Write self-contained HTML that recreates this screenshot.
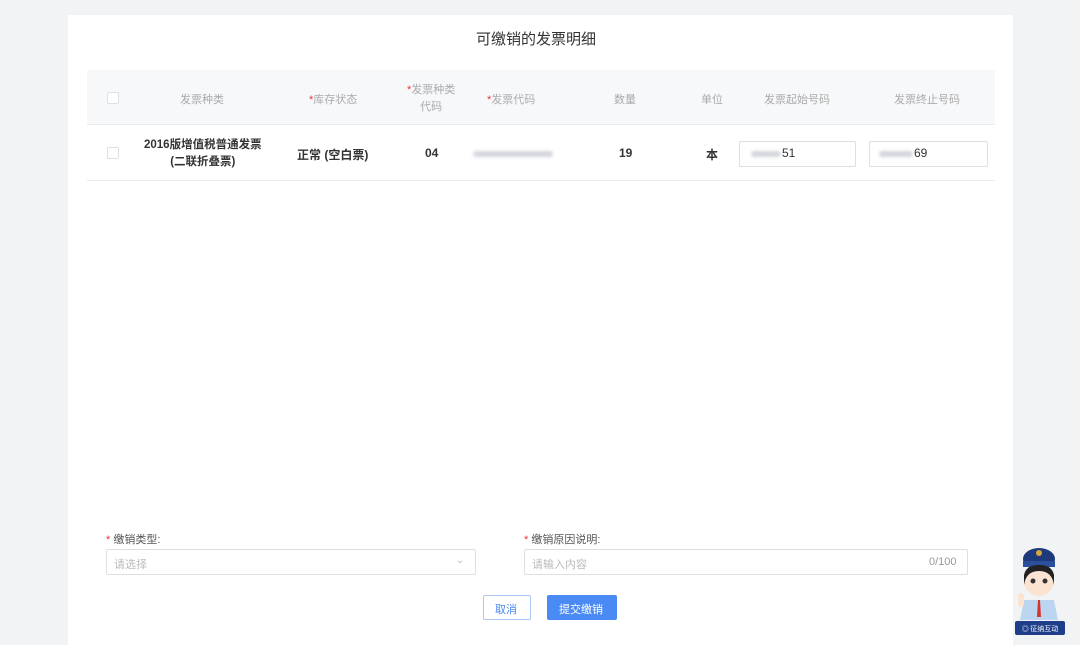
<!DOCTYPE html>
<html><head><meta charset="utf-8"><style>
*{margin:0;padding:0;box-sizing:border-box}
body{width:1080px;height:645px;background:#f2f3f5;font-family:"Liberation Sans","Noto Sans CJK SC",sans-serif;position:relative;overflow:hidden;color:#333}
.card{position:absolute;left:68px;top:15px;width:945px;height:630px;background:#fff}
.a{position:absolute;white-space:nowrap}
.hd{position:absolute;left:87px;top:70px;width:908px;height:55px;background:#f7f8fa;border-bottom:1px solid #e8eaee}
.row{position:absolute;left:87px;top:125px;width:908px;height:56px;border-bottom:1px solid #e8eaee}
.h{color:#aaa;font-size:11px}
.r{color:#e33}
.cb{position:absolute;width:12px;height:12px;border:1px solid #dcdfe6;border-radius:2px;background:#fff}
.c{font-size:12px;color:#333;font-weight:bold;text-align:center}
.inp{position:absolute;border:1px solid #dcdfe6;border-radius:2px;background:#fff}
.blur{position:absolute;height:6px;background:#d4d6dc;border-radius:3px;filter:blur(1.5px)}
</style></head><body>
<div class="card"></div>
<div class="a" style="left:476px;top:28px;font-size:15px;color:#333">可缴销的发票明细</div>
<div class="hd"></div>
<div class="cb" style="left:107px;top:92px"></div>
<div class="a h" style="left:180px;top:91px">发票种类</div>
<div class="a h" style="left:309px;top:91px"><span class="r">*</span>库存状态</div>
<div class="a h" style="left:407px;top:82px;text-align:center;line-height:17px"><span class="r">*</span>发票种类<br>代码</div>
<div class="a h" style="left:487px;top:91px"><span class="r">*</span>发票代码</div>
<div class="a h" style="left:614px;top:91px">数量</div>
<div class="a h" style="left:701px;top:91px">单位</div>
<div class="a h" style="left:764px;top:91px">发票起始号码</div>
<div class="a h" style="left:894px;top:91px">发票终止号码</div>
<div class="row"></div>
<div class="cb" style="left:107px;top:147px"></div>
<div class="a c" style="left:144px;top:137px;line-height:17px;font-size:11.5px">2016版增值税普通发票<br>(二联折叠票)</div>
<div class="a c" style="left:297px;top:146px">正常 (空白票)</div>
<div class="a c" style="left:425px;top:146px">04</div>
<div class="blur" style="left:473px;top:151px;width:80px"></div>
<div class="a c" style="left:619px;top:146px">19</div>
<div class="a c" style="left:706px;top:146px">本</div>
<div class="inp" style="left:739px;top:141px;width:117px;height:26px"></div>
<div class="blur" style="left:751px;top:151px;width:30px"></div>
<div class="a c" style="left:782px;top:146px;font-weight:normal">51</div>
<div class="inp" style="left:869px;top:141px;width:119px;height:26px"></div>
<div class="blur" style="left:879px;top:151px;width:34px"></div>
<div class="a c" style="left:914px;top:146px;font-weight:normal">69</div>
<div class="a" style="left:106px;top:531px;font-size:11px;color:#555"><span class="r">*</span> 缴销类型:</div>
<div class="inp" style="left:106px;top:549px;width:370px;height:26px"></div>
<div class="a" style="left:114px;top:556px;font-size:11px;color:#bbb">请选择</div>
<div class="a" style="left:456px;top:555px;font-size:10px;color:#bbb">⌄</div>
<div class="a" style="left:524px;top:531px;font-size:11px;color:#555"><span class="r">*</span> 缴销原因说明:</div>
<div class="inp" style="left:524px;top:549px;width:444px;height:26px"></div>
<div class="a" style="left:532px;top:556px;font-size:11px;color:#bbb">请输入内容</div>
<div class="a" style="left:929px;top:556px;font-size:11px;color:#999">0/100</div>
<div class="inp" style="left:483px;top:595px;width:48px;height:25px;border-color:#a9c8f5"></div>
<div class="a" style="left:495px;top:601px;font-size:11px;color:#4a8af4">取消</div>
<div style="position:absolute;left:547px;top:595px;width:70px;height:25px;background:#4a8af4;border-radius:2px"></div>
<div class="a" style="left:559px;top:601px;font-size:11px;color:#fff">提交缴销</div>
<svg style="position:absolute;left:1012px;top:545px" width="56" height="95" viewBox="0 0 56 95">
<ellipse cx="27" cy="14" rx="16" ry="11" fill="#1d3b7a"/>
<rect x="11" y="16" width="32" height="6" fill="#2b4f9a"/>
<circle cx="27" cy="8" r="3" fill="#d8a53a"/>
<ellipse cx="27" cy="36" rx="15" ry="15" fill="#fbe3d2"/>
<path d="M12 30 Q14 20 27 20 Q40 20 42 30 L42 40 Q40 26 27 26 Q14 26 12 40Z" fill="#222"/>
<circle cx="21" cy="36" r="2.5" fill="#333"/><circle cx="33" cy="36" r="2.5" fill="#333"/>
<path d="M12 55 L42 55 L46 75 L8 75Z" fill="#bcd6f2"/>
<path d="M26 55 L28 55 L29 72 L25 72Z" fill="#d9342b"/>
<rect x="6" y="48" width="6" height="14" rx="3" fill="#fbe3d2"/>
<rect x="3" y="76" width="50" height="14" rx="2" fill="#1e3e8a"/>
<text x="28" y="86" font-size="7" fill="#fff" text-anchor="middle" font-family="Noto Sans CJK SC,sans-serif">◎ 征纳互动</text>
</svg>
</body></html>
